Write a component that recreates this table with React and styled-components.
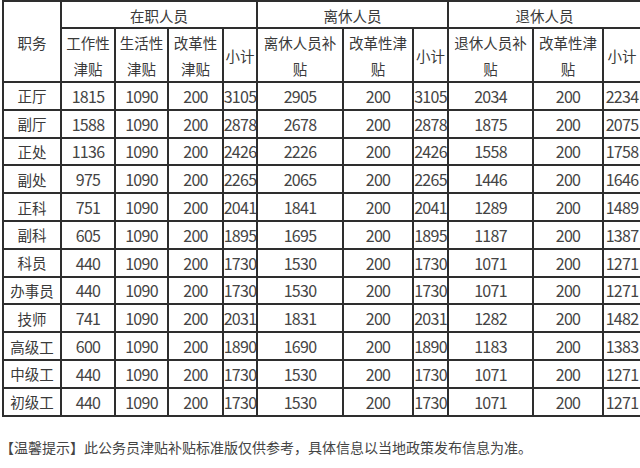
import styled, { createGlobalStyle } from 'styled-components'

const GlobalStyle = createGlobalStyle`
    html, body {
        margin: 0;
        padding: 0;
        background: #ffffff;
        overflow: hidden;
    }
    body {
        font-family: "Noto Sans CJK SC", "Noto Sans", sans-serif;
        color: #333333;
    }
`

const rows = [
    ['正厅', 1815, 1090, 200, 3105, 2905, 200, 3105, 2034, 200, 2234],
    ['副厅', 1588, 1090, 200, 2878, 2678, 200, 2878, 1875, 200, 2075],
    ['正处', 1136, 1090, 200, 2426, 2226, 200, 2426, 1558, 200, 1758],
    ['副处', 975, 1090, 200, 2265, 2065, 200, 2265, 1446, 200, 1646],
    ['正科', 751, 1090, 200, 2041, 1841, 200, 2041, 1289, 200, 1489],
    ['副科', 605, 1090, 200, 1895, 1695, 200, 1895, 1187, 200, 1387],
    ['科员', 440, 1090, 200, 1730, 1530, 200, 1730, 1071, 200, 1271],
    ['办事员', 440, 1090, 200, 1730, 1530, 200, 1730, 1071, 200, 1271],
    ['技师', 741, 1090, 200, 2031, 1831, 200, 2031, 1282, 200, 1482],
    ['高级工', 600, 1090, 200, 1890, 1690, 200, 1890, 1183, 200, 1383],
    ['中级工', 440, 1090, 200, 1730, 1530, 200, 1730, 1071, 200, 1271],
    ['初级工', 440, 1090, 200, 1730, 1530, 200, 1730, 1071, 200, 1271],
]

// sub headers, '|' marks the line break
const subHeads = [
    '工作性|津贴',
    '生活性|津贴',
    '改革性|津贴',
    '小计',
    '离休人员补|贴',
    '改革性津|贴',
    '小计',
    '退休人员补|贴',
    '改革性津|贴',
    '小计',
]

const App = () => {
    return (
        <Page>
            <GlobalStyle />
            <Grid>
                <HeadCell $rowSpan={2}>职务</HeadCell>
                <HeadCell $colSpan={4}>在职人员</HeadCell>
                <HeadCell $colSpan={3}>离休人员</HeadCell>
                <HeadCell $colSpan={3}>退休人员</HeadCell>
                {subHeads.map((text, key) => (
                    <HeadCell key={key}>
                        {text.split('|').map((line, i) => (
                            <HeadLine key={i}>{line}</HeadLine>
                        ))}
                    </HeadCell>
                ))}
                {rows.map((row) =>
                    row.map((value, i) =>
                        i === 0 ? (
                            <NameCell key={row[0] + i}>{value}</NameCell>
                        ) : (
                            <NumCell key={row[0] + i}>{value}</NumCell>
                        )
                    )
                )}
            </Grid>
            <Note>【温馨提示】此公务员津贴补贴标准版仅供参考，具体信息以当地政策发布信息为准。</Note>
        </Page>
    )
}

const Page = styled.div`
    width: 640px;
    height: 468px;
    padding-left: 2px;
    box-sizing: border-box;
    overflow: hidden;
`

const Grid = styled.div`
    display: grid;
    grid-template-columns: 56px 52px 51px 53px 32px 84px 68px 33px 83px 68px 36px;
    grid-template-rows: 25px 52px repeat(12, 25.8px);
    gap: 2px;
    padding: 2px;
    width: 640px;
    box-sizing: border-box;
    background: #2e2e2e;
`

const Cell = styled.div`
    background: #ffffff;
    display: flex;
    align-items: center;
    justify-content: center;
    overflow: hidden;
    white-space: nowrap;
    color: #3a3a3a;
`

const HeadCell = styled(Cell)`
    flex-direction: column;
    font-size: 14.5px;
    padding-top: 1px;
    grid-row: span ${(p) => p.$rowSpan || 1};
    grid-column: span ${(p) => p.$colSpan || 1};
`

const HeadLine = styled.div`
    line-height: 26px;
`

const NameCell = styled(Cell)`
    font-size: 14.5px;
`

const NumCell = styled(Cell)`
    font-size: 16px;
    letter-spacing: -0.7px;
    color: #444444;
`

const Note = styled.div`
    margin: 20px 0 0 -2px;
    font-size: 14px;
    line-height: 20px;
    color: #444444;
    white-space: nowrap;
`

export default App
